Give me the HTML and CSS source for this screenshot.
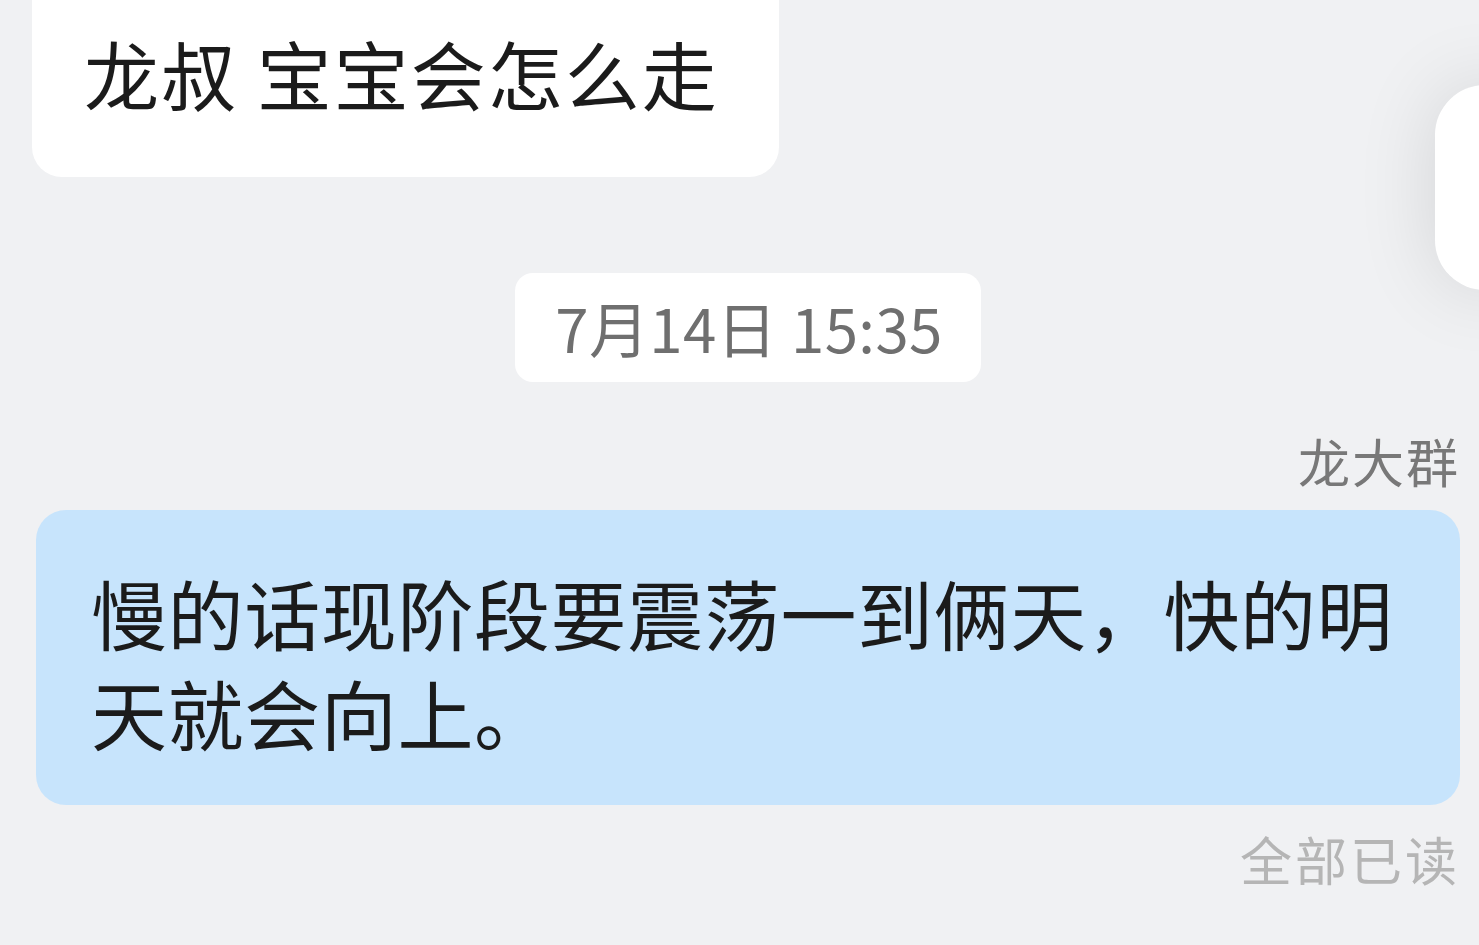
FILE: index.html
```html
<!DOCTYPE html>
<html lang="zh-CN">
<head>
    <meta charset="UTF-8">
    <meta name="viewport" content="width=device-width, initial-scale=1.0">
    <title>聊天</title>
    <link rel="stylesheet" href="styles.css">
</head>
<body>

    <div class="chat">
        <div class="bubble bubble-in">龙叔 宝宝会怎么走</div>

        <div class="time-row">
            <span class="time">7月14日 15:35</span>
        </div>

        <div class="sender">龙大群</div>
        <div class="bubble bubble-out">慢的话现阶段要震荡一到俩天，快的明天就会向上。</div>
        <div class="read">全部已读</div>
    </div>

    <!-- floating button at the right edge -->
    <div class="float-btn"></div>

</body>
</html>
```

FILE: styles.css
```css
html, body {
    margin: 0;
    height: 100%;
    overflow: hidden;
}
body {
    background-color: #f0f1f3;
    font-family: "Noto Sans CJK SC", "Noto Sans", sans-serif;
    color: #1b1b1b;
}
.chat {
    display: flex;
    flex-direction: column;
    padding: 0 19px 0 36px;
}
.bubble {
    border-radius: 30px;
    font-size: 75px;
    line-height: 100px;
}
.bubble-in {
    align-self: flex-start;
    margin-top: -29px;
    margin-left: -4px;
    padding: 52px 60px 54px 52px;
    background-color: #fff;
    letter-spacing: 2px;
}
.time-row {
    display: flex;
    justify-content: center;
    margin-top: 96px;
}
.time {
    background-color: #fff;
    border-radius: 18px;
    padding: 23px 38px 25px 40px;
    font-size: 60px;
    line-height: 61px;
    letter-spacing: 0.4px;
    color: #6f6f6f;
}
.sender {
    align-self: flex-end;
    margin-top: 49px;
    font-size: 52px;
    line-height: 60px;
    letter-spacing: 2px;
    color: #787878;
}
.bubble-out {
    margin-top: 19px;
    padding: 52px 50px 43px 55px;
    background-color: #c7e4fc;
    font-size: 76px;
    letter-spacing: 0.6px;
}
.read {
    align-self: flex-end;
    margin-top: 24px;
    font-size: 52px;
    line-height: 60px;
    letter-spacing: 3px;
    color: #b5b5b5;
}
.float-btn {
    position: fixed;
    top: 85px;
    right: -60px;
    width: 104px;
    height: 205px;
    border-radius: 50px;
    background-color: #fff;
    box-shadow: 0 0 80px rgba(0, 0, 0, 0.12);
}
```
